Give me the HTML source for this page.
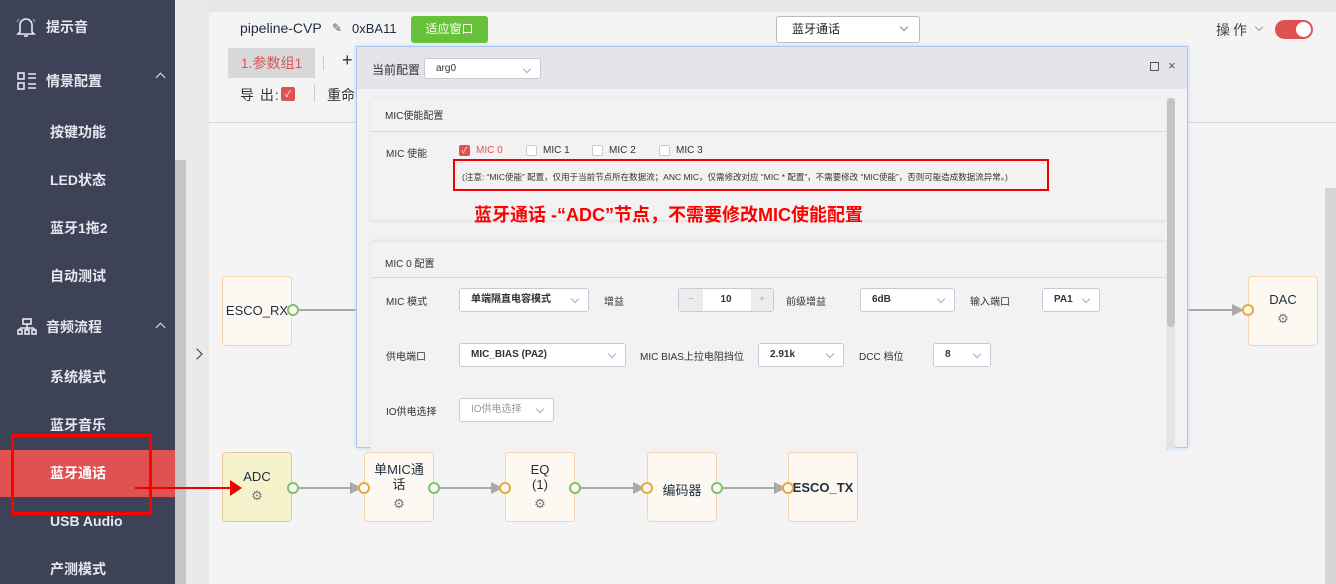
<!DOCTYPE html><html><head><meta charset="utf-8"><style>
*{margin:0;padding:0;box-sizing:border-box}
body{width:1336px;height:584px;overflow:hidden;position:relative;background:#e7e7e7;font-family:"Liberation Sans","Noto Sans CJK SC",sans-serif;font-size:13px;color:#333}
.a{position:absolute}
#sb{left:0;top:0;width:175px;height:584px;background:#3d4257}
.si{position:absolute;left:50px;color:#e6e8ef;font-weight:bold;font-size:14px;transform:translateY(-50%)}
.sh{left:46px;font-size:14px}
.node{position:absolute;width:70px;height:70px;background:#fdf8f2;border:1px solid #f9d3ae;border-radius:4px;text-align:center;font-size:13px;color:#1f2d3d}
.dot{position:absolute;width:12px;height:12px;border-radius:50%;border:2px solid #7dc36b;background:#fdf8f2}
.din{border-color:#e8a93c}
.line{position:absolute;height:2px;background:#a9a9a9}
.arr{position:absolute;width:0;height:0;border-top:6px solid transparent;border-bottom:6px solid transparent;border-left:12px solid #a9a9a9}
.gear{font-size:13px;color:#777}
.sel{position:absolute;height:24px;background:#fff;border:1px solid #c5cad8;border-radius:3px;font-size:10px;font-weight:bold;color:#333;padding-left:11px;line-height:22px}
.sel:after{content:"";position:absolute;right:10px;top:7px;width:5px;height:5px;border-right:1px solid #aab;border-bottom:1px solid #aab;transform:rotate(45deg)}
.lb{position:absolute;font-size:10px;color:#333;font-weight:bold}
.cb{position:absolute;width:11px;height:11px;border:1px solid #ccc;background:#fff;border-radius:2px}
</style></head><body>
<div id="sb" class="a">
<svg class="a" style="left:16px;top:16px" width="20" height="22" viewBox="0 0 20 22" fill="none" stroke="#e6e8ef" stroke-width="1.6"><path d="M4 16V9a6 6 0 0 1 12 0v7l2 2H2z"/><path d="M8 20h4"/><path d="M3 3L1 6M17 3l2 3" stroke="#4a90e2"/></svg>
<div class="si sh" style="top:27px">提示音</div>
<svg class="a" style="left:17px;top:72px" width="20" height="18" viewBox="0 0 20 18" fill="none" stroke="#e6e8ef" stroke-width="1.6"><rect x="1" y="1" width="6" height="6"/><rect x="1" y="11" width="6" height="6"/><path d="M11 2h8M11 6h8M11 12h8M11 16h8"/></svg>
<div class="si sh" style="top:81px">情景配置</div>
<div class="a" style="left:157px;top:74px;width:7px;height:7px;border-left:1.5px solid #e6e8ef;border-top:1.5px solid #e6e8ef;transform:rotate(45deg)"></div>
<div class="si" style="top:132px">按键功能</div>
<div class="si" style="top:180px">LED状态</div>
<div class="si" style="top:228px">蓝牙1拖2</div>
<div class="si" style="top:276px">自动测试</div>
<svg class="a" style="left:17px;top:318px" width="20" height="18" viewBox="0 0 20 18" fill="none" stroke="#e6e8ef" stroke-width="1.6"><rect x="6" y="1" width="8" height="5"/><path d="M10 6v4M3 10h14M3 10v2M17 10v2M10 10v2"/><rect x="1" y="12" width="4" height="4"/><rect x="8" y="12" width="4" height="4"/><rect x="15" y="12" width="4" height="4"/></svg>
<div class="si sh" style="top:327px">音频流程</div>
<div class="a" style="left:157px;top:324px;width:7px;height:7px;border-left:1.5px solid #e6e8ef;border-top:1.5px solid #e6e8ef;transform:rotate(45deg)"></div>
<div class="si" style="top:377px">系统模式</div>
<div class="si" style="top:425px">蓝牙音乐</div>
<div class="a" style="left:0;top:450px;width:175px;height:47px;background:#e05252"></div>
<div class="si" style="top:473px;color:#fff">蓝牙通话</div>
<div class="si" style="top:521px">USB Audio</div>
<div class="si" style="top:569px">产测模式</div>
</div>
<div class="a" style="left:11px;top:434px;width:141px;height:81px;border:3px solid #f00"></div>
<div class="a" style="left:175px;top:0;width:34px;height:584px;background:#eaeaea"></div>
<div class="a" style="left:175px;top:160px;width:11px;height:424px;background:#c6c6c6"></div>
<div class="a" style="left:193px;top:350px;width:8px;height:8px;border-right:1.5px solid #333;border-top:1.5px solid #333;transform:rotate(45deg)"></div>
<div class="a" style="left:209px;top:12px;width:1127px;height:572px;background:#f4f4f4;border-radius:4px 0 0 0"></div>
<div class="a" style="left:209px;top:122px;width:1127px;height:1px;background:#d6d6d6"></div>
<div class="a" style="left:1325px;top:188px;width:11px;height:396px;background:#d6d6d6"></div>
<div class="a" style="left:240px;top:20px;font-size:14px;color:#1f2d3d">pipeline-CVP</div>
<div class="a" style="left:332px;top:21px;font-size:12px;color:#555">✎</div>
<div class="a" style="left:352px;top:21px;font-size:13px;color:#1f2d3d">0xBA11</div>
<div class="a" style="left:411px;top:16px;width:77px;height:27px;background:#67c23a;border-radius:3px;color:#fff;font-size:12px;text-align:center;line-height:27px">适应窗口</div>
<div class="a" style="left:776px;top:16px;width:144px;height:27px;background:#fff;border:1px solid #bbb;border-radius:3px;font-size:12px;line-height:25px;padding-left:15px;color:#222">蓝牙通话<span class="a" style="right:12px;top:7px;width:6px;height:6px;border-right:1px solid #888;border-bottom:1px solid #888;transform:rotate(45deg)"></span></div>
<div class="a" style="left:1216px;top:20px;font-size:14px;color:#444;letter-spacing:3px">操作</div>
<div class="a" style="left:1256px;top:24px;width:6px;height:6px;border-right:1px solid #999;border-bottom:1px solid #999;transform:rotate(45deg)"></div>
<div class="a" style="left:1275px;top:20px;width:38px;height:19px;background:#e05252;border-radius:10px"><div class="a" style="right:2px;top:2px;width:15px;height:15px;background:#fff;border-radius:50%"></div></div>
<div class="a" style="left:228px;top:48px;width:87px;height:30px;background:#d8d8d8;color:#e05252;font-size:14px;text-align:center;line-height:30px">1.参数组1</div>
<div class="a" style="left:323px;top:56px;width:1px;height:14px;background:#ccc"></div>
<div class="a" style="left:342px;top:50px;font-size:18px;color:#333">+</div>
<div class="a" style="left:240px;top:85px;font-size:14px;color:#333;letter-spacing:1px">导 出:</div>
<div class="a" style="left:281px;top:87px;width:14px;height:14px;background:#e05252;border-radius:2px;color:#fff;font-size:9px;text-align:center;line-height:14px">✓</div>
<div class="a" style="left:314px;top:84px;width:1px;height:18px;background:#ccc"></div>
<div class="a" style="left:327px;top:85px;font-size:14px;color:#333">重命名</div>

<div class="node" style="left:222px;top:276px"><div style="margin-top:26px">ESCO_RX</div></div>
<div class="dot" style="left:287px;top:304px"></div>
<div class="line" style="left:299px;top:309px;width:60px"></div>
<div class="line" style="left:1187px;top:309px;width:50px"></div>
<div class="arr" style="left:1232px;top:304px"></div>
<div class="node" style="left:1248px;top:276px"><div style="margin-top:15px">DAC</div><div class="gear" style="margin-top:4px">⚙</div></div>
<div class="dot din" style="left:1242px;top:304px"></div>

<div class="node" style="left:222px;top:452px;background:#f6f3cc;border-color:#e8c79e"><div style="margin-top:16px">ADC</div><div class="gear" style="margin-top:4px">⚙</div></div>
<div class="node" style="left:364px;top:452px"><div style="margin-top:9px;line-height:15px">单MIC通<br>话</div><div class="gear" style="margin-top:4px">⚙</div></div>
<div class="node" style="left:505px;top:452px"><div style="margin-top:9px;line-height:15px">EQ<br>(1)</div><div class="gear" style="margin-top:4px">⚙</div></div>
<div class="node" style="left:647px;top:452px"><div style="margin-top:27px">编码器</div></div>
<div class="node" style="left:788px;top:452px"><div style="margin-top:27px;font-weight:bold">ESCO_TX</div></div>
<div class="line" style="left:299px;top:487px;width:56px"></div><div class="arr" style="left:350px;top:482px"></div>
<div class="line" style="left:440px;top:487px;width:56px"></div><div class="arr" style="left:491px;top:482px"></div>
<div class="line" style="left:581px;top:487px;width:56px"></div><div class="arr" style="left:633px;top:482px"></div>
<div class="line" style="left:723px;top:487px;width:56px"></div><div class="arr" style="left:774px;top:482px"></div>
<div class="dot" style="left:287px;top:482px"></div>
<div class="dot din" style="left:358px;top:482px"></div><div class="dot" style="left:428px;top:482px"></div>
<div class="dot din" style="left:499px;top:482px"></div><div class="dot" style="left:569px;top:482px"></div>
<div class="dot din" style="left:641px;top:482px"></div><div class="dot" style="left:711px;top:482px"></div>
<div class="dot din" style="left:782px;top:482px"></div>
<div class="line" style="left:135px;top:487px;width:95px;height:2px;background:#e00"></div>
<div class="a" style="left:230px;top:480px;border-top:8px solid transparent;border-bottom:8px solid transparent;border-left:12px solid #e00"></div>

<div class="a" style="left:356px;top:46px;width:832px;height:402px;background:#f2f2f2;border:1px solid #a9c9f0;box-shadow:0 0 4px #b5d3f5">
<div class="a" style="left:0;top:0;width:830px;height:42px;background:#e4e5ea"></div>
<div class="a" style="left:15px;top:14px;font-size:12px;color:#333">当前配置</div>
<div class="sel" style="left:67px;top:11px;width:117px;height:21px;line-height:19px;font-weight:normal">arg0</div>
<div class="a" style="left:793px;top:15px;width:9px;height:9px;border:1px solid #555"></div>
<div class="a" style="left:811px;top:11px;font-size:13px;color:#555">×</div>
<div class="a" style="left:14px;top:51px;width:795px;height:122px;background:#f2f2f2;box-shadow:0 1px 3px #ddd"></div>
<div class="a" style="left:14px;top:84px;width:795px;height:1px;background:#d9d9d9"></div>
<div class="lb" style="left:28px;top:60px;font-weight:normal">MIC使能配置</div>
<div class="lb" style="left:29px;top:98px;font-weight:normal">MIC 使能</div>
<div class="a" style="left:102px;top:98px;width:11px;height:11px;background:#e05252;border-radius:2px;color:#fff;font-size:8px;text-align:center;line-height:11px">✓</div>
<div class="lb" style="left:119px;top:98px;color:#e05252;font-weight:normal">MIC 0</div>
<div class="cb" style="left:169px;top:98px"></div><div class="lb" style="left:186px;top:98px;font-weight:normal">MIC 1</div>
<div class="cb" style="left:235px;top:98px"></div><div class="lb" style="left:252px;top:98px;font-weight:normal">MIC 2</div>
<div class="cb" style="left:302px;top:98px"></div><div class="lb" style="left:319px;top:98px;font-weight:normal">MIC 3</div>
<div class="a" style="left:96px;top:112px;width:596px;height:32px;border:2px solid #e00"></div>
<div class="a" style="left:105px;top:124px;font-size:8.5px;color:#333;white-space:nowrap">(注意: “MIC使能” 配置，仅用于当前节点所在数据流；ANC MIC，仅需修改对应 “MIC * 配置”，不需要修改 “MIC使能”，否则可能造成数据流异常。)</div>
<div class="a" style="left:117px;top:154px;font-size:18px;font-weight:bold;color:#f00;white-space:nowrap">蓝牙通话 -“ADC”节点，不需要修改MIC使能配置</div>
<div class="a" style="left:14px;top:195px;width:795px;height:210px;background:#f2f2f2;box-shadow:0 -1px 3px #ddd"></div>
<div class="a" style="left:14px;top:230px;width:795px;height:1px;background:#d9d9d9"></div>
<div class="lb" style="left:28px;top:208px;font-weight:normal">MIC 0 配置</div>
<div class="lb" style="left:29px;top:246px;font-weight:normal">MIC 模式</div>
<div class="sel" style="left:102px;top:241px;width:130px">单端隔直电容模式</div>
<div class="lb" style="left:247px;top:246px;font-weight:normal">增益</div>
<div class="a" style="left:321px;top:241px;width:96px;height:24px;border:1px solid #c5cad8;border-radius:3px;background:#fff;font-size:10px;font-weight:bold;text-align:center;line-height:22px"><div class="a" style="left:0;top:0;width:24px;height:22px;background:#ececec;color:#aaa;font-weight:normal">−</div>10<div class="a" style="right:0;top:0;width:22px;height:22px;background:#ececec;color:#aaa;font-weight:normal">+</div></div>
<div class="lb" style="left:429px;top:246px;font-weight:normal">前级增益</div>
<div class="sel" style="left:503px;top:241px;width:95px">6dB</div>
<div class="lb" style="left:613px;top:246px;font-weight:normal">输入端口</div>
<div class="sel" style="left:685px;top:241px;width:58px">PA1</div>
<div class="lb" style="left:29px;top:301px;font-weight:normal">供电端口</div>
<div class="sel" style="left:102px;top:296px;width:167px">MIC_BIAS (PA2)</div>
<div class="lb" style="left:283px;top:301px;font-weight:normal">MIC BIAS上拉电阻挡位</div>
<div class="sel" style="left:401px;top:296px;width:86px">2.91k</div>
<div class="lb" style="left:502px;top:301px;font-weight:normal">DCC 档位</div>
<div class="sel" style="left:576px;top:296px;width:58px">8</div>
<div class="lb" style="left:29px;top:356px;font-weight:normal">IO供电选择</div>
<div class="sel" style="left:102px;top:351px;width:95px;color:#999;font-weight:normal">IO供电选择</div>
<div class="a" style="left:810px;top:51px;width:8px;height:350px;background:#e4e4e4"></div>
<div class="a" style="left:810px;top:51px;width:8px;height:229px;background:#c4c4c4;border-radius:4px"></div>
</div>
</body></html>
